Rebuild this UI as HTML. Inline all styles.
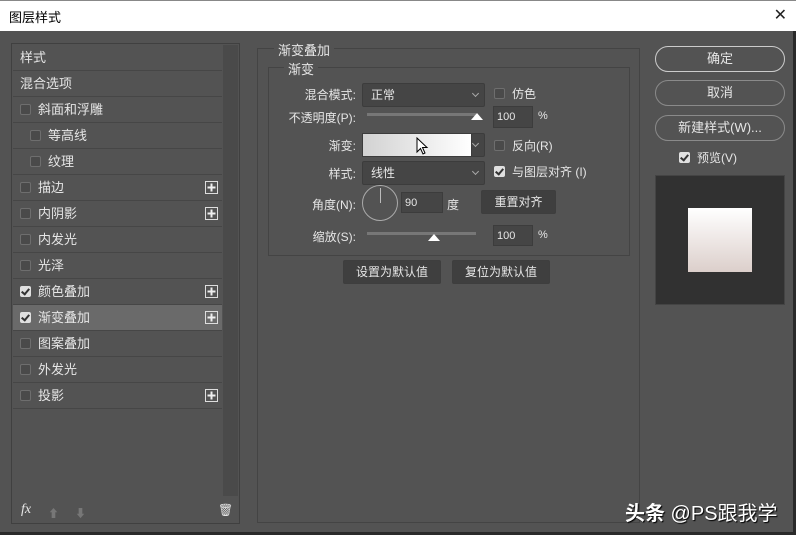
<!DOCTYPE html>
<html><head><meta charset="utf-8"><style>
*{margin:0;padding:0;box-sizing:border-box}
body{width:796px;height:535px;background:#535353;position:relative;overflow:hidden;font-family:"Liberation Sans","Noto Sans CJK SC",sans-serif;font-size:12px;color:#e6e6e6}
.a{position:absolute}
.title{left:0;top:0;width:796px;height:31px;background:#fff;border-top:1px solid #888;color:#000;font-size:13px;padding:6px 0 0 9px}
.row{position:absolute;left:13px;width:209px;height:26px;border-bottom:1px solid #464646;line-height:25px;padding-left:7px;font-size:13px}
.cb{display:inline-block;width:11px;height:11px;border:1px solid #6e6e6e;border-radius:2px;background:#4a4a4a;vertical-align:-1px;margin-right:7px}
.cbk{background:#e0e0e0;border-color:#e0e0e0;position:relative}
.cbk:after{content:"";position:absolute;left:2px;top:0px;width:3px;height:6px;border:solid #333;border-width:0 2px 2px 0;transform:rotate(40deg)}
.plus{position:absolute;right:4px;top:6px;width:13px;height:13px;border:1px solid #ddd}
.plus:before{content:"";position:absolute;left:2px;top:5px;width:7px;height:1px;background:#eee;box-shadow:0 0 0 .5px #eee}
.plus:after{content:"";position:absolute;left:5px;top:2px;width:1px;height:7px;background:#eee;box-shadow:0 0 0 .5px #eee}
.dd{position:absolute;background:#454545;border:1px solid #3c3c3c;border-radius:2px;padding-left:8px;line-height:22px;font-size:12px}
.dd:after{content:"";position:absolute;right:6px;top:7px;width:4px;height:4px;border:solid #aaa;border-width:0 1px 1px 0;transform:rotate(45deg)}
.inp{position:absolute;background:#454545;border:1px solid #3c3c3c;padding-left:3px;line-height:20px;font-size:11px}
.lbl{position:absolute;text-align:right;width:100px;font-size:12px}
.btn{position:absolute;background:#454545;border:1px solid #3e3e3e;text-align:center;line-height:22px;font-size:12px;border-radius:2px}
.pill{position:absolute;left:655px;width:130px;border:1px solid #8a8a8a;border-radius:13px;text-align:center;line-height:23px;font-size:13px}
.sl{position:absolute;height:3px;background:#777}
.hd{position:absolute;width:0;height:0;border-left:6px solid transparent;border-right:6px solid transparent;border-bottom:7px solid #fff}
</style></head><body>
<div class="a title">图层样式<span class="a" style="right:9px;top:4px;font-size:16px;color:#222">✕</span></div>
<div class="a" style="left:793px;top:31px;width:3px;height:504px;background:#2a2a2a"></div>
<div class="a" style="left:0;top:532px;width:796px;height:3px;background:#2a2a2a"></div>
<div class="a" style="left:11px;top:43px;width:229px;height:481px;border:1px solid #404040;background:#535353"></div>
<div class="a" style="left:223px;top:45px;width:15px;height:451px;background:#4a4a4a"></div>
<div class="row" style="top:45px">样式</div>
<div class="row" style="top:71px">混合选项</div>
<div class="row" style="top:97px"><span class="cb"></span>斜面和浮雕</div>
<div class="row" style="top:123px;padding-left:17px"><span class="cb"></span>等高线</div>
<div class="row" style="top:149px;padding-left:17px"><span class="cb"></span>纹理</div>
<div class="row" style="top:175px"><span class="cb"></span>描边<span class="plus"></span></div>
<div class="row" style="top:201px"><span class="cb"></span>内阴影<span class="plus"></span></div>
<div class="row" style="top:227px"><span class="cb"></span>内发光</div>
<div class="row" style="top:253px"><span class="cb"></span>光泽</div>
<div class="row" style="top:279px"><span class="cb cbk"></span>颜色叠加<span class="plus"></span></div>
<div class="row" style="top:305px;background:#6a6a6a"><span class="cb cbk"></span>渐变叠加<span class="plus"></span></div>
<div class="row" style="top:331px"><span class="cb"></span>图案叠加</div>
<div class="row" style="top:357px"><span class="cb"></span>外发光</div>
<div class="row" style="top:383px"><span class="cb"></span>投影<span class="plus"></span></div>
<div class="a" style="left:21px;top:502px;font-style:italic;font-size:14px;font-family:'Liberation Serif',serif">fx</div>
<div class="a" style="left:48px;top:505px;color:#777;font-size:11px">⬆</div>
<div class="a" style="left:75px;top:505px;color:#777;font-size:11px">⬇</div>
<div class="a" style="left:218px;top:503px;font-size:12px">🗑</div>

<div class="a" style="left:257px;top:48px;width:383px;height:475px;border:1px solid #444"></div>
<div class="a" style="left:274px;top:40px;background:#535353;padding:0 4px;font-size:13px">渐变叠加</div>
<div class="a" style="left:268px;top:67px;width:362px;height:189px;border:1px solid #444"></div>
<div class="a" style="left:284px;top:59px;background:#535353;padding:0 4px;font-size:13px">渐变</div>

<div class="lbl" style="left:256px;top:86px">混合模式:</div>
<div class="dd" style="left:362px;top:83px;width:123px;height:24px">正常</div>
<div class="a" style="left:494px;top:85px"><span class="cb"></span>仿色</div>
<div class="lbl" style="left:256px;top:109px">不透明度(P):</div>
<div class="sl" style="left:367px;top:113px;width:109px"></div>
<div class="hd" style="left:471px;top:113px"></div>
<div class="inp" style="left:493px;top:106px;width:40px;height:22px">100</div>
<div class="a" style="left:538px;top:110px;font-size:11px">%</div>
<div class="lbl" style="left:256px;top:137px">渐变:</div>
<div class="a" style="left:362px;top:133px;width:110px;height:24px;background:linear-gradient(90deg,#d2d2d2,#fff);border:1px solid #3c3c3c"></div>
<div class="dd" style="left:471px;top:133px;width:14px;height:24px;padding:0"></div>
<svg class="a" style="left:416px;top:137px" width="14" height="20"><path d="M1 1 L1 15 L4.5 11.5 L7 17 L9 16 L6.5 10.5 L11 10.5 Z" fill="#fff" stroke="#000"/></svg>
<div class="a" style="left:494px;top:137px"><span class="cb"></span>反向(R)</div>
<div class="lbl" style="left:256px;top:165px">样式:</div>
<div class="dd" style="left:362px;top:161px;width:123px;height:24px">线性</div>
<div class="a" style="left:494px;top:163px"><span class="cb cbk"></span>与图层对齐 (I)</div>
<div class="lbl" style="left:256px;top:196px">角度(N):</div>
<div class="a" style="left:362px;top:185px;width:36px;height:36px;border:1px solid #aaa;border-radius:50%"></div>
<div class="a" style="left:380px;top:188px;width:1px;height:15px;background:#bbb"></div>
<div class="inp" style="left:401px;top:192px;width:42px;height:21px">90</div>
<div class="a" style="left:447px;top:196px;font-size:12px">度</div>
<div class="btn" style="left:481px;top:190px;width:75px;height:24px;background:#3f3f3f">重置对齐</div>
<div class="lbl" style="left:256px;top:228px">缩放(S):</div>
<div class="sl" style="left:367px;top:232px;width:109px"></div>
<div class="hd" style="left:428px;top:234px"></div>
<div class="inp" style="left:493px;top:225px;width:40px;height:21px">100</div>
<div class="a" style="left:538px;top:229px;font-size:11px">%</div>
<div class="btn" style="left:343px;top:260px;width:98px;height:24px;background:#3f3f3f">设置为默认值</div>
<div class="btn" style="left:452px;top:260px;width:98px;height:24px;background:#3f3f3f">复位为默认值</div>

<div class="pill" style="top:46px;height:26px;border-color:#ccc">确定</div>
<div class="pill" style="top:80px;height:26px">取消</div>
<div class="pill" style="top:115px;height:26px">新建样式(W)...</div>
<div class="a" style="left:679px;top:149px"><span class="cb cbk"></span>预览(V)</div>
<div class="a" style="left:655px;top:175px;width:130px;height:130px;background:#313131;border:1px solid #444"></div>
<div class="a" style="left:688px;top:208px;width:64px;height:64px;background:linear-gradient(#fff,#dccfcb)"></div>
<div class="a" style="left:625px;top:497px;font-size:20px;color:#fff;text-shadow:1px 1px 1px #000;font-family:'Liberation Sans','Noto Sans CJK SC',sans-serif"><b>头条</b> @PS跟我学</div>
</body></html>
